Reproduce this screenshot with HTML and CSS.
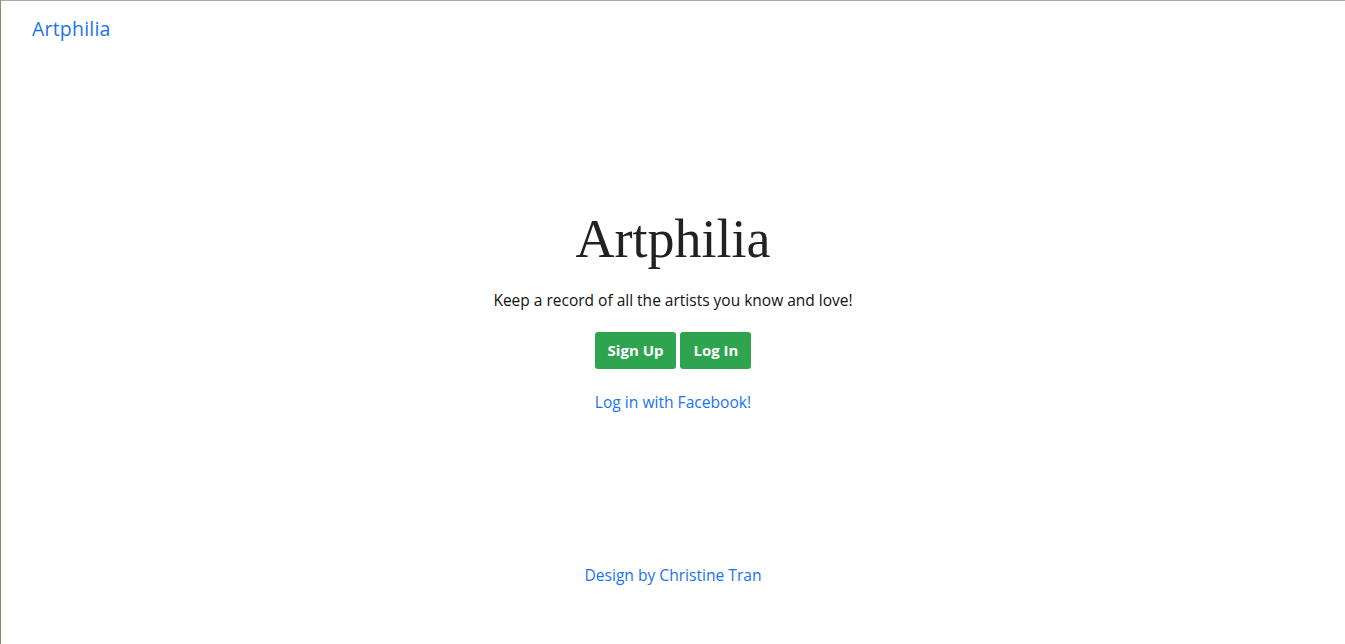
FILE: index.html
```html
<!DOCTYPE html>
<html lang="en">
<head>
<meta charset="utf-8">
<title>Artphilia</title>
<link rel="stylesheet" href="styles.css">
</head>
<body>
<div class="page">
  <nav class="navbar">
    <a class="brand" href="#">Artphilia</a>
  </nav>
  <main class="hero">
    <h1 class="title">Artphilia</h1>
    <p class="tagline">Keep a record of all the artists you know and love!</p>
    <div class="actions">
      <a class="btn" href="#">Sign Up</a>
      <a class="btn" href="#">Log In</a>
    </div>
    <a class="fb" href="#">Log in with Facebook!</a>
  </main>
  <footer class="footer">
    <a href="#">Design by Christine Tran</a>
  </footer>
</div>
</body>
</html>
```
FILE: styles.css
```css
html, body {
  margin: 0;
  padding: 0;
  height: 100%;
  background: #fff;
}
body {
  font-family: "Open Sans", "Noto Sans", sans-serif;
  color: #212529;
}
.page {
  box-sizing: border-box;
  height: 644px;
  border-top: 1px solid #a9a9a9;
  border-left: 1px solid #8c8a64;
  display: flex;
  flex-direction: column;
}
a {
  color: #1a73f0;
  text-decoration: none;
}
.navbar {
  padding: 17px 0 0 31px;
  height: 40px;
}
.brand {
  font-size: 19.5px;
  line-height: 22px;
  letter-spacing: 0.2px;
}
.hero {
  display: flex;
  flex-direction: column;
  align-items: center;
  padding-top: 150px;
}
.title {
  margin: 0;
  font-family: "Liberation Serif", "DejaVu Serif", serif;
  font-weight: 400;
  font-size: 54px;
  line-height: 63px;
  color: #222;
}
.tagline {
  margin: 19px 0 0;
  font-size: 15.5px;
  line-height: 20px;
  color: #111;
}
.actions {
  display: flex;
  gap: 4px;
  margin-top: 22px;
}
.btn {
  display: block;
  background: #2ea44f;
  color: #fff;
  font-weight: 700;
  font-size: 15px;
  line-height: 37px;
  height: 37px;
  padding: 0 13px;
  border-radius: 3px;
}
.fb {
  margin-top: 23px;
  font-size: 15.6px;
  line-height: 20px;
}
.footer {
  margin-top: auto;
  padding-bottom: 59px;
  text-align: center;
  font-size: 15.6px;
  line-height: 20px;
}
```
